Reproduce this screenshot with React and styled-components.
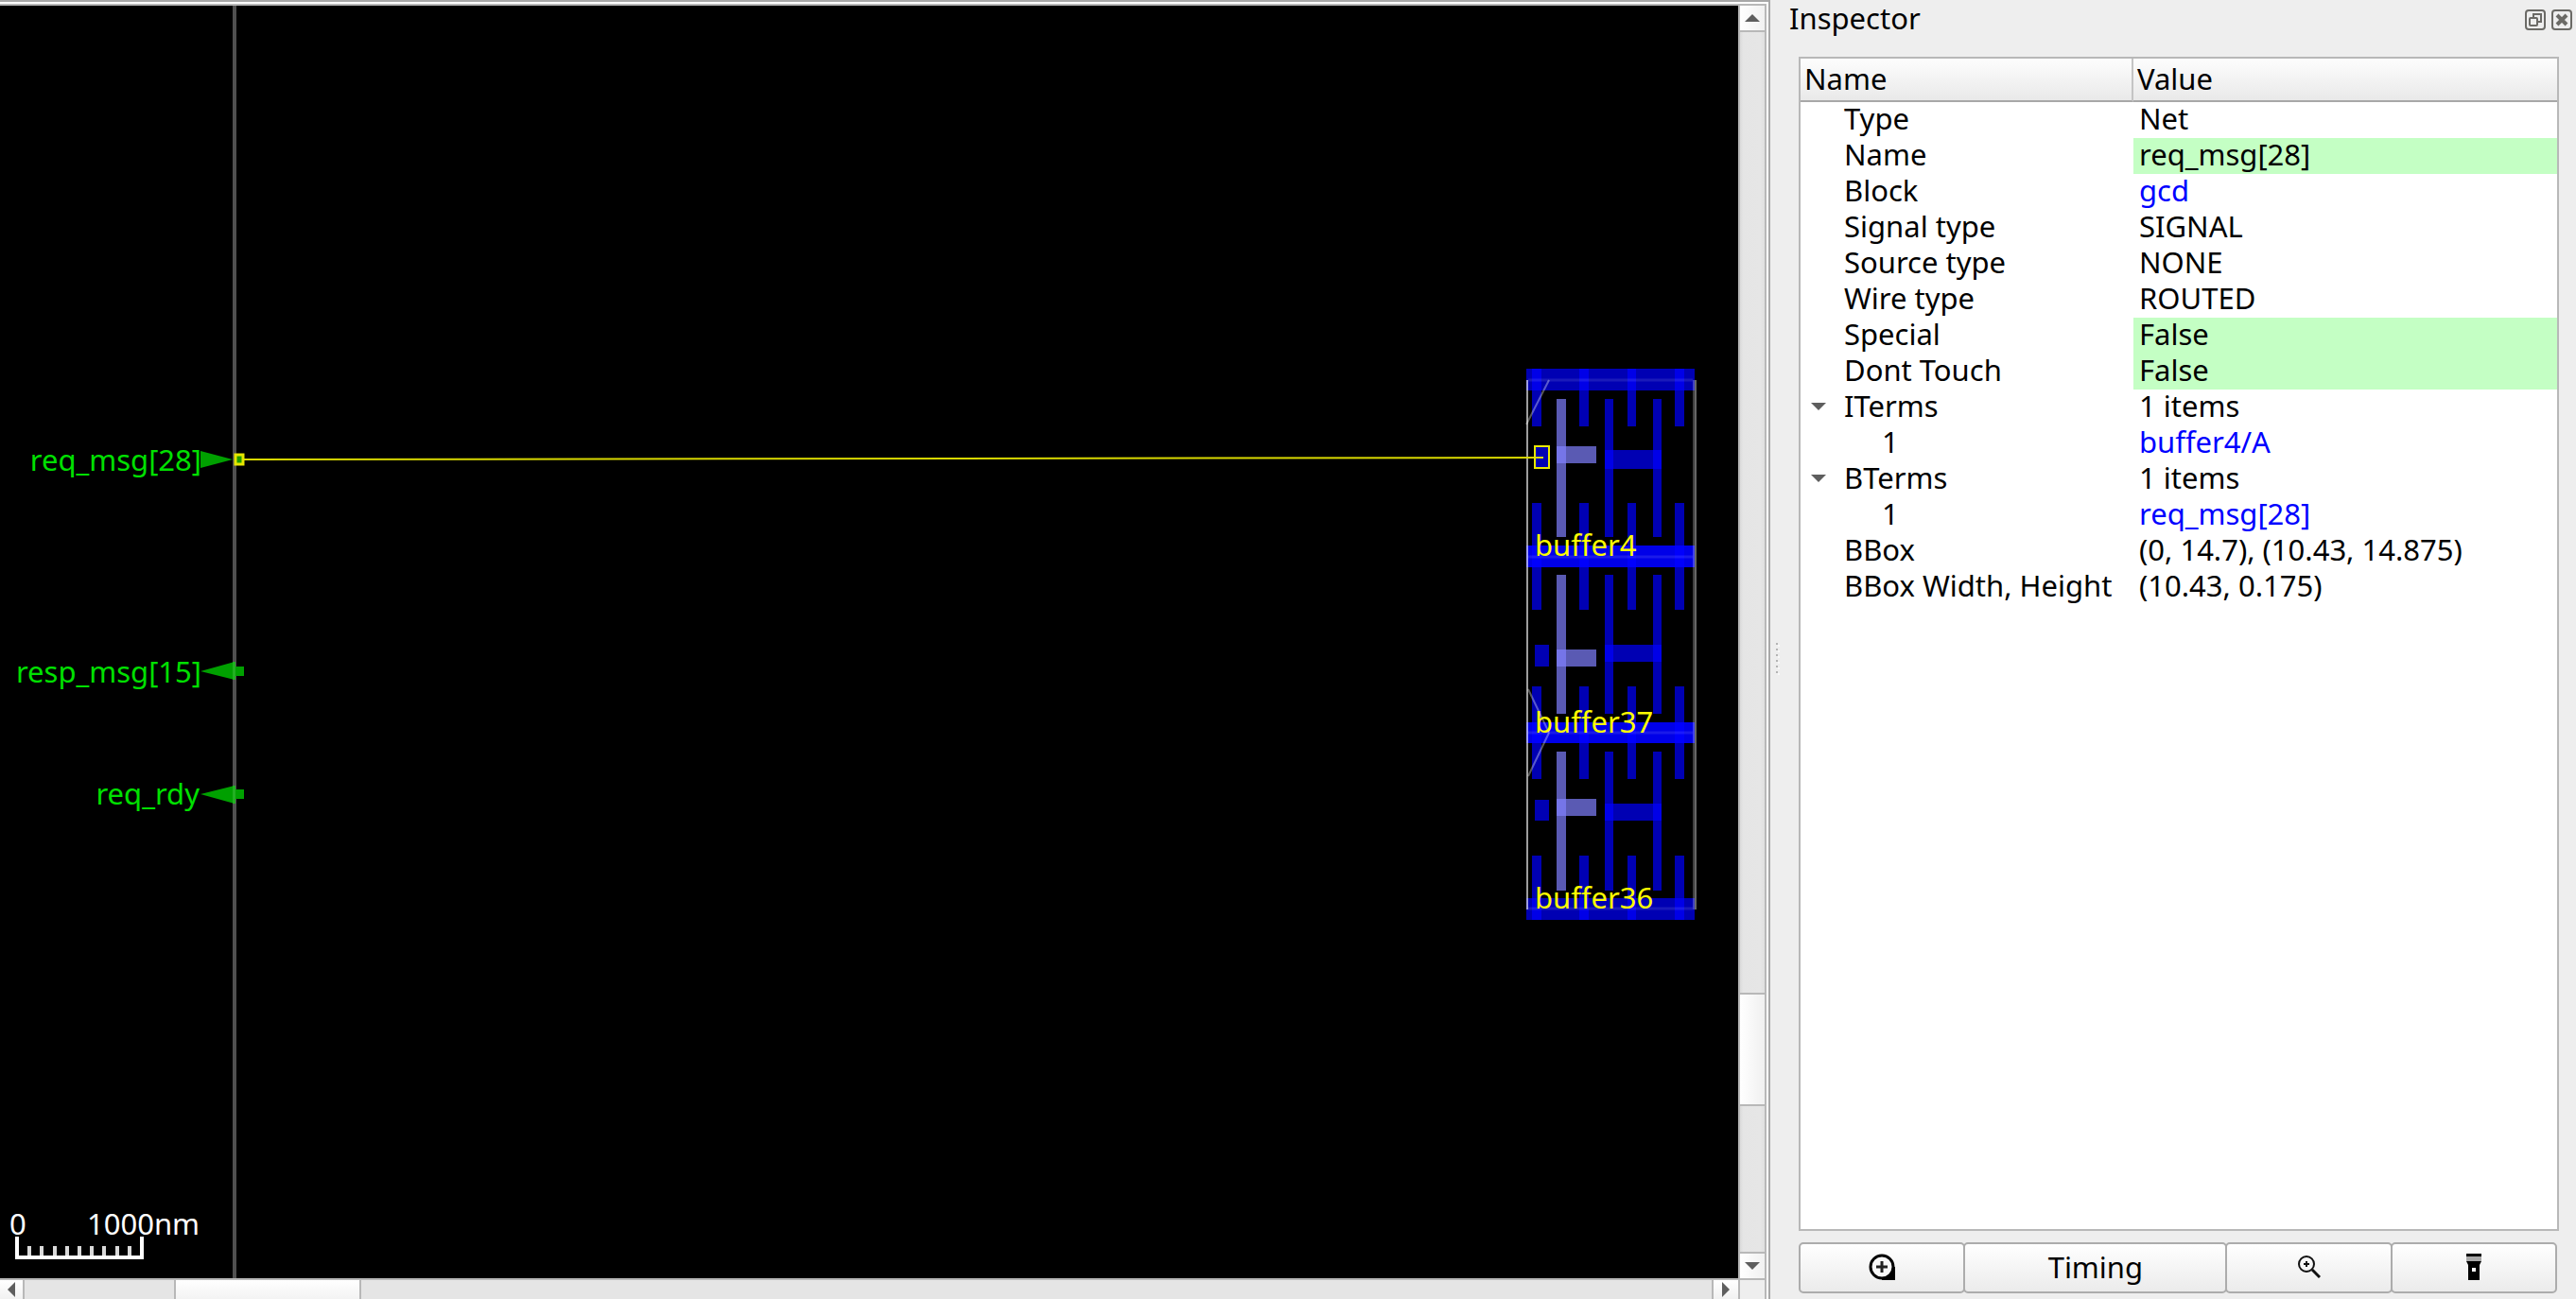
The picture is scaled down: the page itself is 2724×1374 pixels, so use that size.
import React, { useState } from 'react';
import styled, { createGlobalStyle } from 'styled-components';

const FONT = '"Noto Sans", "Open Sans", sans-serif';
const EDGE = '#b8b8b8';

const GlobalStyle = createGlobalStyle`
  * { box-sizing: border-box; }
  body {
    margin: 0;
    background: #eeeeee;
    color: #000;
    font-family: ${FONT};
    font-size: 31px;
    line-height: 34px;
    overflow: hidden;
  }
  button { font: inherit; color: inherit; padding: 0; }
`;

const Window = styled.main`
  display: flex;
  height: 100vh;
`;

const Viewer = styled.section`
  flex: 1;
  min-width: 0;
  display: grid;
  grid-template-columns: minmax(0, 1fr) 30px;
  grid-template-rows: minmax(0, 1fr) 22px;
  border-top: 2px solid #a8a8a8;
  border-right: 2px solid #a8a8a8;
  background: #fff;
  padding: 2px 2px 0 0;
`;

const Canvas = styled.svg`
  display: block;
  width: 100%;
  height: 100%;
  min-height: 0;
  background: #000;
  border-top: 2px solid ${EDGE};
  font-family: ${FONT};
  font-size: 31px;
`;

const VScroll = styled.div`
  display: flex;
  flex-direction: column;
  border: solid ${EDGE};
  border-width: 2px 2px 0 2px;
  background: linear-gradient(90deg, #dadada, #e5e5e5 12%, #e6e6e6 80%, #e0e0e0);
`;

const HScroll = styled.div`
  display: flex;
  border-top: 2px solid ${EDGE};
  background: #e5e5e5;
`;

const Corner = styled.div`
  border: solid ${EDGE};
  border-width: 2px 2px 0 2px;
  background: #eeeeee;
`;

const Space = styled.div`
  flex: ${(p) => p.$grow} 1 0;
`;

const VThumb = styled.div`
  flex: ${(p) => p.$grow} 1 0;
  border: solid ${EDGE};
  border-width: 2px 0;
  background: linear-gradient(90deg, #ffffff, #f0f0f0);
`;

const HThumb = styled.div`
  flex: ${(p) => p.$grow} 1 0;
  border: solid ${EDGE};
  border-width: 0 2px;
  background: linear-gradient(#ffffff, #f3f3f3);
`;

const StepButton = styled.button`
  display: flex;
  flex: none;
  align-items: center;
  justify-content: center;
  border: 0 solid ${EDGE};
  border-${(p) => p.$side}-width: 2px;
  width: ${(p) => (p.$horizontal ? '28px' : '100%')};
  height: ${(p) => (p.$horizontal ? '100%' : '28px')};
  background: linear-gradient(${(p) => (p.$horizontal ? '180deg' : '90deg')}, #ffffff, #f1f1f1);
  svg { display: block; }
`;

const FirstStepButton = styled(StepButton)`
  width: 26px;
`;

const Splitter = styled.div`
  display: flex;
  flex: none;
  flex-direction: column;
  justify-content: center;
  align-items: center;
  gap: 4px;
  width: 14px;
  padding-top: 18px;
`;

const Dot = styled.span`
  width: 2px;
  height: 2px;
  background: #b4b4b4;
  box-shadow: 2px 2px 0 #f8f8f8;
`;

const Dock = styled.aside`
  flex: none;
  display: flex;
  flex-direction: column;
  width: 838px;
  padding: 0 4px 6px 6px;
`;

const TitleBar = styled.header`
  display: flex;
  align-items: center;
  gap: 6px;
  height: 42px;
`;

const Title = styled.h1`
  flex: 1;
  margin: 0;
  padding-bottom: 4px;
  font-size: 31px;
  font-weight: 400;
  line-height: 34px;
`;

const TitleButton = styled.button`
  display: block;
  width: 22px;
  height: 22px;
  border: 0;
  background: none;
  svg { display: block; }
`;

const Body = styled.div`
  flex: 1;
  display: flex;
  flex-direction: column;
  gap: 12px;
  min-height: 0;
  padding: 18px 14px 0 10px;
`;

const TreeFrame = styled.div`
  flex: 1;
  min-height: 0;
  border: 2px solid ${EDGE};
  background: #fff;
`;

const Tree = styled.table`
  width: 100%;
  table-layout: fixed;
  border-collapse: separate;
  border-spacing: 0;
`;

const NameCol = styled.col`
  width: 352px;
`;

const HeadCell = styled.th`
  height: 46px;
  padding: 0 4px 2px;
  border-bottom: 2px solid #a8a8a8;
  border-right: ${(p) => (p.$last ? '0' : '2px solid #c4c4c4')};
  background: linear-gradient(#fdfdfd, #f3f3f3 50%, #e9e9e9);
  font-weight: 400;
  text-align: left;
`;

const NameCell = styled.th`
  height: 38px;
  padding: 0 0 0 ${(p) => (p.$child ? '40px' : '0')};
  font-weight: 400;
  text-align: left;
  white-space: nowrap;
`;

const NameLine = styled.div`
  display: flex;
  align-items: center;
  height: 38px;
  padding-bottom: 4px;
`;

const Branch = styled.span`
  display: flex;
  flex: none;
  justify-content: center;
  width: 40px;
  margin-right: 6px;
  padding: 2px 2px 0 0;
`;

const Toggle = styled.button`
  display: block;
  border: 0;
  background: none;
  svg { display: block; }
`;

const ValueCell = styled.td`
  height: 38px;
  padding: 0 6px 4px;
  background: ${(p) => (p.$editable ? '#c4ffc4' : 'transparent')};
  white-space: nowrap;
`;

const Link = styled.a`
  color: #0000ff;
  text-decoration: none;
`;

const Actions = styled.div`
  display: flex;
  height: 54px;
  padding-right: 2px;
`;

const ActionButton = styled.button`
  display: flex;
  flex: ${(p) => (p.$wide ? '278' : '174')} 1 0;
  align-items: center;
  justify-content: center;
  padding-bottom: 2px;
  border: 2px solid #acacac;
  border-radius: 5px;
  background: linear-gradient(#ffffff, #ebebeb);
  & + & { margin-left: -2px; }
  svg { display: block; }
`;

const rows = [
  { name: 'Type', value: 'Net' },
  { name: 'Name', value: 'req_msg[28]', editable: true },
  { name: 'Block', value: 'gcd', link: true },
  { name: 'Signal type', value: 'SIGNAL' },
  { name: 'Source type', value: 'NONE' },
  { name: 'Wire type', value: 'ROUTED' },
  { name: 'Special', value: 'False', editable: true },
  { name: 'Dont Touch', value: 'False', editable: true },
  { name: 'ITerms', value: '1 items', children: [{ name: '1', value: 'buffer4/A', link: true }] },
  { name: 'BTerms', value: '1 items', children: [{ name: '1', value: 'req_msg[28]', link: true }] },
  { name: 'BBox', value: '(0, 14.7), (10.43, 14.875)' },
  { name: 'BBox Width, Height', value: '(10.43, 0.175)' },
];

const STUBS = [[1620, 10], [1670, 10], [1721, 9], [1771, 10]];

const cells = [
  { name: 'buffer4', rails: [[390, 23], [577, 23]], stubs: [[390, 61], [532, 68]], bars: [422, 146], cross: [476, 20], out: [472, 18], pin: [471, 24], corner: [1614, 449, 1638, 402], base: 588 },
  { name: 'buffer37', rails: [[577, 23], [764, 22]], stubs: [[577, 68], [726, 60]], bars: [608, 147], cross: [682, 18], out: [687, 18], pin: [682, 23], corner: [1616, 729, 1638, 775], base: 775 },
  { name: 'buffer36', rails: [[764, 22], [950, 23]], stubs: [[764, 60], [905, 68]], bars: [795, 147], cross: [850, 18], out: [845, 18], pin: [846, 22], corner: [1616, 821, 1638, 775], base: 961 },
];

function Cell({ cell }) {
  const [barY, barH] = cell.bars;
  return (
    <g>
      <g fill="#0000ff" fillOpacity="0.7">
        {cell.rails.map(([y, h]) => <rect key={y} x="1614" y={y} width="178" height={h} />)}
        {cell.stubs.map(([y, h]) =>
          STUBS.map(([x, w]) => <rect key={`${x}-${y}`} x={x} y={y} width={w} height={h} />)
        )}
        <rect x="1697" y={barY} width="9" height={barH} />
        <rect x="1748" y={barY} width="9" height={barH} />
        <rect x="1697" y={cell.cross[0]} width="60" height={cell.cross[1]} />
        <rect x="1623" y={cell.pin[0]} width="15" height={cell.pin[1]} />
      </g>
      <g fill="#8080ff" fillOpacity="0.7">
        <rect x="1646" y={barY} width="10" height={barH} />
        <rect x="1646" y={cell.out[0]} width="42" height={cell.out[1]} />
      </g>
    </g>
  );
}

function Layout() {
  return (
    <Canvas role="img" aria-label="Layout view">
      <g transform="translate(0 -6)">
        <rect x="246" y="0" width="4" height="3000" fill="#505050" />

        <g fill="#00a000">
          <path d="M212 477 L246 486 L212 495 Z" />
          <path d="M212 710 L248 700 V705 H258 V715 H248 V719 Z" />
          <path d="M212 840 L248 831 V835 H258 V845 H248 V850 Z" />
        </g>
        <path d="M246 700 h3 v19 h-3z M246 831 h3 v19 h-3z" fill="#22b022" />
        <g fill="#00e000" textAnchor="end">
          <text x="213" y="498">req_msg[28]</text>
          <text x="213" y="722">resp_msg[15]</text>
          <text x="211" y="851">req_rdy</text>
        </g>

        {cells.map((cell) => <Cell key={cell.name} cell={cell} />)}
        <g stroke="#ffffff" fill="none">
          <path d="M1615 402 V962" strokeWidth="2" strokeOpacity="0.62" />
          <path d="M1791 402 V962" strokeWidth="2" strokeOpacity="0.25" />
          <path d="M1793 402 V962" strokeWidth="2" strokeOpacity="0.4" />
          <path d="M1616 402 H1790 M1616 589 H1790 M1616 775 H1790 M1616 961 H1790" strokeWidth="3" strokeOpacity="0.1" />
          {cells.map(({ name, corner: [x1, y1, x2, y2] }) => (
            <line key={name} x1={x1} y1={y1} x2={x2} y2={y2} strokeWidth="2" strokeOpacity="0.35" />
          ))}
        </g>

        <line x1="258" y1="486" x2="1632" y2="484" stroke="#d8d800" strokeWidth="2" />
        <rect x="249" y="481" width="8" height="10" fill="#209c00" stroke="#e6e600" strokeWidth="3" />
        <rect x="1623" y="472" width="15" height="23" fill="none" stroke="#e8e800" strokeWidth="2" />
        <g fill="#ffff00">
          {cells.map((cell) => <text key={cell.name} x="1623" y={cell.base}>{cell.name}</text>)}
        </g>

        <g fill="#ffffff">
          <text x="10" y="1306">0</text>
          <text x="92" y="1306">1000nm</text>
        </g>
        <g stroke="#ffffff" fill="none">
          <path d="M18 1308 V1330 H150 V1308" strokeWidth="4" />
          <path d="M31 1318 v10 M44 1318 v10 M58 1318 v10 M71 1318 v10 M84 1318 v10 M97 1318 v10 M110 1318 v10 M124 1318 v10 M137 1318 v10" strokeWidth="4" strokeOpacity="0.85" />
        </g>
      </g>
    </Canvas>
  );
}

const triangles = {
  up: 'M8 0 L16 8 H0 Z',
  down: 'M0 0 H16 L8 8 Z',
  left: 'M8 0 V16 L0 8 Z',
  right: 'M0 0 V16 L8 8 Z',
};

function Triangle({ dir }) {
  const flat = dir === 'up' || dir === 'down';
  return (
    <svg width={flat ? 16 : 8} height={flat ? 8 : 16} aria-hidden="true">
      <path d={triangles[dir]} fill="#5e5e5e" />
    </svg>
  );
}

function Row({ row, child, open, onToggle }) {
  return (
    <tr>
      <NameCell scope="row" $child={child}>
        <NameLine>
          <Branch>
            {row.children && (
              <Toggle type="button" aria-label={`Toggle ${row.name}`} aria-expanded={open} onClick={onToggle}>
                <Triangle dir={open ? 'down' : 'right'} />
              </Toggle>
            )}
          </Branch>
          {row.name}
        </NameLine>
      </NameCell>
      <ValueCell $editable={row.editable}>
        {row.link ? <Link href="#">{row.value}</Link> : row.value}
      </ValueCell>
    </tr>
  );
}

function Inspector() {
  const [closed, setClosed] = useState({});
  return (
    <Dock>
      <TitleBar>
        <Title>Inspector</Title>
        <TitleButton type="button" aria-label="Float">
          <svg width="22" height="22" fill="none" stroke="#6b6a66" strokeWidth="2">
            <rect x="1" y="1" width="20" height="20" rx="3" />
            <rect x="5" y="9" width="8" height="8" rx="1" />
            <path d="M9 8 V5 H17 V13 H14" />
          </svg>
        </TitleButton>
        <TitleButton type="button" aria-label="Close">
          <svg width="22" height="22" fill="none" stroke="#6b6a66" strokeWidth="2">
            <rect x="1" y="1" width="20" height="20" rx="3" />
            <path d="M6 6 L16 16 M16 6 L6 16" strokeWidth="4" />
          </svg>
        </TitleButton>
      </TitleBar>
      <Body>
        <TreeFrame>
          <Tree>
            <colgroup>
              <NameCol />
              <col />
            </colgroup>
            <thead>
              <tr>
                <HeadCell scope="col">Name</HeadCell>
                <HeadCell scope="col" $last>Value</HeadCell>
              </tr>
            </thead>
            <tbody>
              {rows.map((row) => {
                const open = !closed[row.name];
                return (
                  <React.Fragment key={row.name}>
                    <Row
                      row={row}
                      open={open}
                      onToggle={() => setClosed({ ...closed, [row.name]: open })}
                    />
                    {open && row.children?.map((kid) => <Row key={kid.name} row={kid} child />)}
                  </React.Fragment>
                );
              })}
            </tbody>
          </Tree>
        </TreeFrame>
        <Actions>
          <ActionButton type="button" aria-label="Add to selection">
            <svg width="28" height="28" fill="none" stroke="#000">
              <path d="M14 14 H28 V28 H14 Z" fill="#000" stroke="none" />
              <circle cx="14" cy="14" r="12" fill="#f8f8f8" strokeWidth="3" />
              <path d="M14 8 V20 M8 14 H20" stroke="#222" strokeWidth="3" />
            </svg>
          </ActionButton>
          <ActionButton type="button" $wide>Timing</ActionButton>
          <ActionButton type="button" aria-label="Zoom to">
            <svg width="24" height="24" fill="none" stroke="#111">
              <circle cx="9" cy="9" r="8" strokeWidth="2" />
              <path d="M9 6 V12 M6 9 H12" strokeWidth="2" />
              <path d="M15 15 L23 23" strokeWidth="3" />
            </svg>
          </ActionButton>
          <ActionButton type="button" aria-label="Highlight">
            <svg width="16" height="28">
              <path d="M0 0 H16 V3 H0 Z M0 8 H16 L14 12 V28 H2 V12 Z" fill="#000" />
              <path d="M0 3 H16 V8 H0 Z" fill="#a8a8a8" />
              <rect x="6" y="15" width="4" height="4" fill="#fff" />
            </svg>
          </ActionButton>
        </Actions>
      </Body>
    </Dock>
  );
}

export default function App() {
  return (
    <>
      <GlobalStyle />
      <Window>
        <Viewer>
          <Layout />
          <VScroll>
            <StepButton type="button" aria-label="Scroll up" $side="bottom"><Triangle dir="up" /></StepButton>
            <Space $grow={1016} />
            <VThumb $grow={116} />
            <Space $grow={154} />
            <StepButton type="button" aria-label="Scroll down" $side="top"><Triangle dir="down" /></StepButton>
          </VScroll>
          <HScroll>
            <FirstStepButton type="button" aria-label="Scroll left" $horizontal $side="right"><Triangle dir="left" /></FirstStepButton>
            <Space $grow={158} />
            <HThumb $grow={194} />
            <Space $grow={1428} />
            <StepButton type="button" aria-label="Scroll right" $horizontal $side="left"><Triangle dir="right" /></StepButton>
          </HScroll>
          <Corner />
        </Viewer>
        <Splitter>
          {[0, 1, 2, 3, 4, 5].map((i) => <Dot key={i} />)}
        </Splitter>
        <Inspector />
      </Window>
    </>
  );
}
